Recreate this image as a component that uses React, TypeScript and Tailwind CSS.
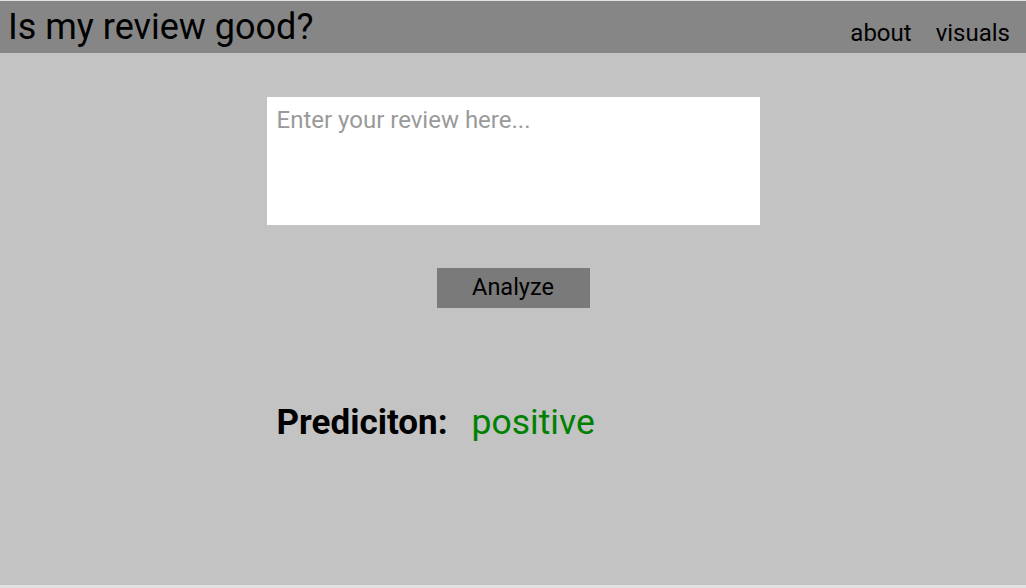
import { useState } from 'react';

export default function App() {
    const [review, setReview] = useState('');

    return (
        <div
            className="min-h-[588px] bg-[#e2e2e2] pt-px"
            style={{ fontFamily: 'Roboto, "Noto Sans", sans-serif' }}
        >
            <header className="flex h-[52px] items-center justify-between bg-[#868686] pl-2 pr-4">
                <h1 className="text-[36px] leading-none text-black">
                    Is my review good?
                </h1>
                <nav className="flex gap-6 pt-3 text-[24px] text-black">
                    <a href="#">about</a>
                    <a href="#">visuals</a>
                </nav>
            </header>
            <main className="flex h-[532px] flex-col items-center bg-[#c3c3c3] pt-11">
                <textarea
                    value={review}
                    onChange={(e) => setReview(e.target.value)}
                    placeholder="Enter your review here..."
                    className="h-[128px] w-[493px] resize-none bg-white px-[10px] py-[5px] text-[24px] text-black outline-none placeholder:text-[#9a9a9a]"
                />
                <button className="mt-[43px] h-10 w-[153px] bg-[#7a7a7a] text-[23.5px] text-black">
                    Analyze
                </button>
                <div className="mt-[88px] flex w-[493px] items-baseline gap-6 pl-[10px]">
                    <span className="text-[35px] font-bold text-black">
                        Prediciton:
                    </span>
                    <span className="text-[35.5px] text-[#008000]">positive</span>
                </div>
            </main>
        </div>
    );
}
